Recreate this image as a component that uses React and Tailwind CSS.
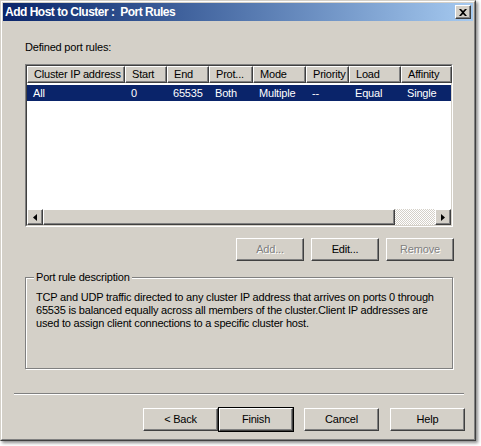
import React from 'react';

const raised =
  'border-t border-l border-t-white border-l-white border-b border-r border-b-[#404040] border-r-[#404040] shadow-[inset_-1px_-1px_#808080]';

const columns = [
  { label: 'Cluster IP address', w: 'w-[98px]' },
  { label: 'Start', w: 'w-[42px]' },
  { label: 'End', w: 'w-[42px]' },
  { label: 'Prot...', w: 'w-[44px]' },
  { label: 'Mode', w: 'w-[53px]' },
  { label: 'Priority', w: 'w-[43px]' },
  { label: 'Load', w: 'w-[52px]' },
  { label: 'Affinity', w: 'w-[51px]' },
];

const row = ['All', '0', '65535', 'Both', 'Multiple', '--', 'Equal', 'Single'];

const Btn = ({ children, disabled, w = 'w-[75px]' }) => (
  <div className={`${w} h-[23px] flex items-center justify-center bg-[#D4D0C8] ${raised}`}>
    <span
      className={
        disabled ? 'text-[#808080] [text-shadow:1px_1px_0_#fff]' : 'text-black'
      }
    >
      {children}
    </span>
  </div>
);

const Arrow = ({ dir }) => (
  <div className={`w-4 h-4 flex items-center justify-center bg-[#D4D0C8] ${raised}`}>
    <svg width="4" height="7" viewBox="0 0 4 7">
      {dir === 'left' ? (
        <path d="M4 0 L0 3.5 L4 7 Z" fill="#000" />
      ) : (
        <path d="M0 0 L4 3.5 L0 7 Z" fill="#000" />
      )}
    </svg>
  </div>
);

export default function App() {
  return (
    <div className="w-[481px] h-[446px] bg-white font-['Liberation_Sans',Arial,sans-serif] text-[11px] tracking-[-0.2px] text-black overflow-hidden">
      {/* window */}
      <div className="w-[476px] h-[441px] border border-t-[#D4D0C8] border-l-[#D4D0C8] border-b-[#404040] border-r-[#404040] shadow-[2px_2px_3px_rgba(0,0,0,0.45)]">
        <div className="w-full h-full border border-t-white border-l-white border-b-[#808080] border-r-[#808080] bg-[#D4D0C8] flex flex-col">
          {/* title bar */}
          <div className="mx-px mt-px h-[18px] flex items-center justify-between pl-[2px] pr-[2px] bg-gradient-to-r from-[#0A246A] to-[#A6CAF0]">
            <span className="text-white font-bold text-[12px] tracking-[-0.5px] whitespace-pre leading-none">
              Add Host to Cluster :  Port Rules
            </span>
            <div className={`w-4 h-[14px] flex items-center justify-center bg-[#D4D0C8] ${raised}`}>
              <svg width="8" height="7" viewBox="0 0 8 7">
                <path d="M0 0 L2 0 L4 2 L6 0 L8 0 L5 3.5 L8 7 L6 7 L4 5 L2 7 L0 7 L3 3.5 Z" fill="#000" />
              </svg>
            </div>
          </div>

          {/* body */}
          <div className="flex flex-col pl-[23px] pt-[20px]">
            <div className="h-[13px] leading-[13px]">Defined port rules:</div>

            {/* list view */}
            <div className="mt-[10px] w-[428px] h-[163px] border border-t-[#808080] border-l-[#808080] border-b-white border-r-white">
              <div className="w-full h-full border border-t-[#404040] border-l-[#404040] border-b-[#D4D0C8] border-r-[#D4D0C8] bg-white flex flex-col">
                <div className="flex h-[17px]">
                  {columns.map((c) => (
                    <div
                      key={c.label}
                      className={`${c.w} h-[17px] shrink-0 flex items-center pl-[6px] bg-[#D4D0C8] whitespace-nowrap overflow-hidden ${raised}`}
                    >
                      {c.label}
                    </div>
                  ))}
                </div>
                <div className="flex h-[16px] mt-[2px] bg-[#0A246A] text-white">
                  {row.map((v, i) => (
                    <div
                      key={i}
                      className={`${columns[i].w} shrink-0 flex items-center pl-[6px] whitespace-nowrap`}
                    >
                      {v}
                    </div>
                  ))}
                </div>
                <div className="flex-1" />
                {/* horizontal scrollbar */}
                <div className="flex h-4">
                  <Arrow dir="left" />
                  <div className={`w-[352px] h-4 bg-[#D4D0C8] ${raised}`} />
                  <div className="flex-1 h-4 bg-[repeating-conic-gradient(#ffffff_0_25%,#D4D0C8_0_50%)] bg-[length:2px_2px]" />
                  <Arrow dir="right" />
                </div>
              </div>
            </div>

            {/* list buttons */}
            <div className="mt-[11px] w-[429px] flex justify-end gap-[7px]">
              <Btn disabled w="w-[68px]">Add...</Btn>
              <Btn w="w-[68px]">Edit...</Btn>
              <Btn disabled w="w-[68px]">Remove</Btn>
            </div>

            {/* group box */}
            <div className="mt-[16px] relative w-[428px] h-[92px] border border-[#808080] shadow-[inset_1px_1px_#fff,1px_1px_#fff]">
              <div className="absolute left-[8px] top-[-7px] px-[2px] bg-[#D4D0C8] leading-[13px]">
                Port rule description
              </div>
              <div className="pt-[13px] pl-[10px] leading-[13px] whitespace-nowrap">
                TCP and UDP traffic directed to any cluster IP address that arrives on ports 0 through
                <br />
                65535 is balanced equally across all members of the cluster.Client IP addresses are
                <br />
                used to assign client connections to a specific cluster host.
              </div>
            </div>
          </div>

          {/* separator */}
          <div className="mt-[24px] ml-[12px] w-[450px] h-[2px] border-t border-t-[#808080] border-b border-b-white" />

          {/* wizard buttons */}
          <div className="mt-[12px] ml-[141px] flex items-center">
            <Btn>&lt; Back</Btn>
            <div className="border border-black">
              <Btn w="w-[74px]">Finish</Btn>
            </div>
            <div className="ml-[10px]">
              <Btn>Cancel</Btn>
            </div>
            <div className="ml-[11px]">
              <Btn>Help</Btn>
            </div>
          </div>
        </div>
      </div>
    </div>
  );
}
